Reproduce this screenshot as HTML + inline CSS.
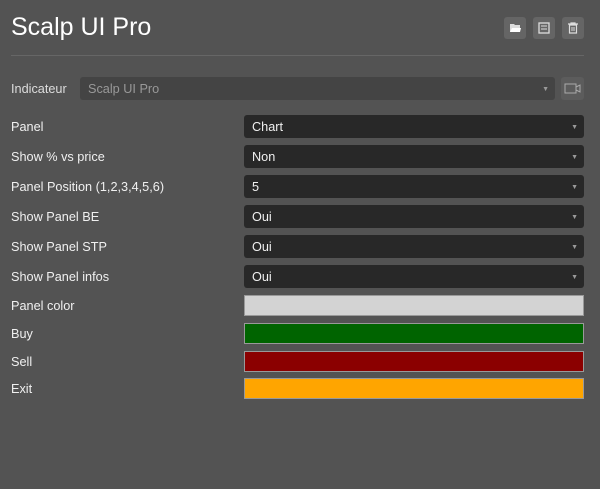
<!DOCTYPE html>
<html><head><style>
body{margin:0;width:600px;height:489px;background:#535353;font-family:"Liberation Sans",sans-serif;color:#f0f0f0;position:relative;overflow:hidden}
.a{position:absolute}
.t{left:11px;top:13px;font-size:25px;color:#fff}
.hr{left:11px;top:55px;width:573px;height:1px;background:#666}
.ib{width:22px;height:22px;top:17px;background:#656565;border-radius:3px}
.lb{left:11px;font-size:12.7px}
.sel{left:244px;width:340px;height:23px;background:#282828;border-radius:3px;font-size:12.7px;line-height:25px;box-sizing:border-box;padding-left:8px}
.sel:after{content:"▼";position:absolute;right:6px;top:0;font-size:7px;color:#999}
.cb{left:244px;width:340px;height:21px;box-sizing:border-box;border:1px solid #999}
</style></head><body>
<div class="a t">Scalp UI Pro</div>
<div class="a ib" style="left:504px"><svg width="22" height="22"><path d="M6 7h4l1 1h5v7H6z" fill="#ddd"/><path d="M8 11h9l-1 4H6z" fill="#fff"/></svg></div>
<div class="a ib" style="left:533px"><svg width="22" height="22"><rect x="6" y="6" width="10" height="10" fill="none" stroke="#ddd" stroke-width="1.3"/><path d="M8 9h6M8 12h6" stroke="#ddd"/></svg></div>
<div class="a ib" style="left:562px"><svg width="22" height="22"><path d="M6 7h10M9 7V6h4v1M7.5 8h7v8h-7z" fill="none" stroke="#ddd" stroke-width="1.2"/><path d="M10 10v4M12 10v4" stroke="#ddd"/></svg></div>
<div class="a hr"></div>
<div class="a lb" style="top:82px;color:#ddd">Indicateur</div>
<div class="a sel" style="left:80px;width:475px;top:77px;background:#444;color:#999">Scalp UI Pro</div>
<div class="a ib" style="left:561px;top:77px;width:23px;height:23px;background:#5c5c5c"><svg width="23" height="23"><rect x="4" y="7" width="11" height="9" fill="none" stroke="#aaa"/><path d="M15 10l4-2v7l-4-2" fill="none" stroke="#aaa"/></svg></div>
<div class="a lb" style="top:120px">Panel</div><div class="a sel" style="top:115px">Chart</div>
<div class="a lb" style="top:150px">Show % vs price</div><div class="a sel" style="top:145px">Non</div>
<div class="a lb" style="top:180px">Panel Position (1,2,3,4,5,6)</div><div class="a sel" style="top:175px">5</div>
<div class="a lb" style="top:210px">Show Panel BE</div><div class="a sel" style="top:205px">Oui</div>
<div class="a lb" style="top:240px">Show Panel STP</div><div class="a sel" style="top:235px">Oui</div>
<div class="a lb" style="top:270px">Show Panel infos</div><div class="a sel" style="top:265px">Oui</div>
<div class="a lb" style="top:299px">Panel color</div><div class="a cb" style="top:295px;background:#d3d3d3"></div>
<div class="a lb" style="top:327px">Buy</div><div class="a cb" style="top:323px;background:#006400"></div>
<div class="a lb" style="top:355px">Sell</div><div class="a cb" style="top:351px;background:#8b0000"></div>
<div class="a lb" style="top:382px">Exit</div><div class="a cb" style="top:378px;background:#ffa500"></div>
</body></html>
